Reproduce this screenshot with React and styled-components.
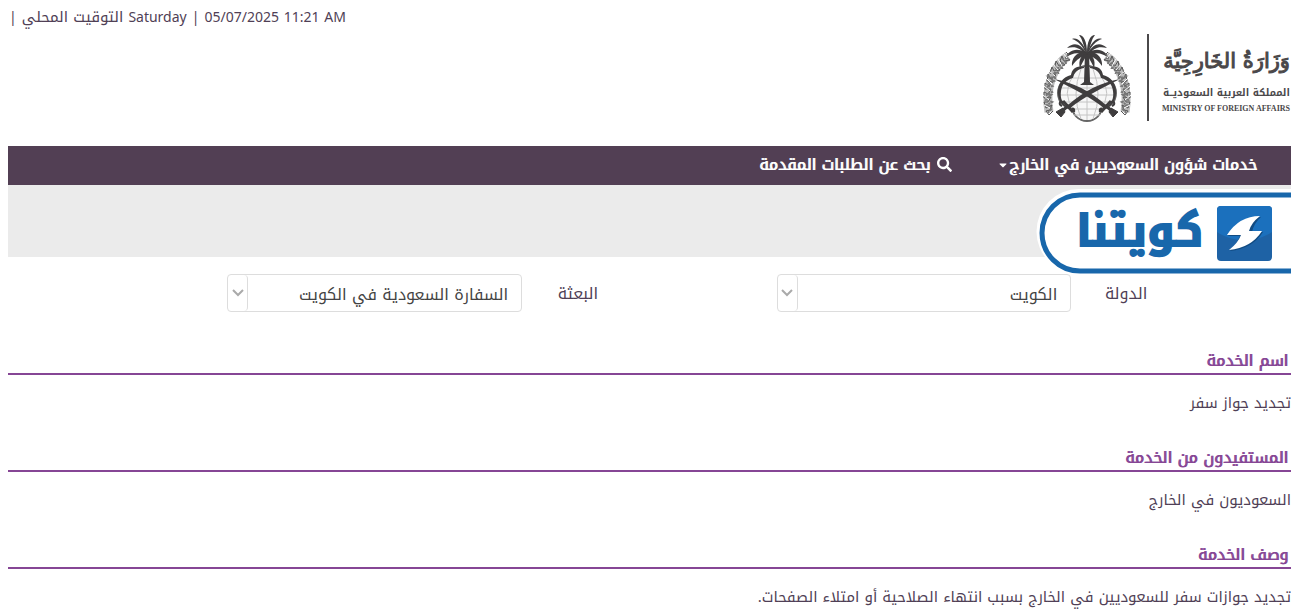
import React, { useState } from "react";
import styled, { createGlobalStyle } from "styled-components";
import { FaSearch, FaCaretDown } from "react-icons/fa";

const GlobalStyle = createGlobalStyle`
  * {
    box-sizing: border-box;
  }
  body {
    margin: 0 4px 0 8px;
    background-color: #fff;
    color: #503f56;
    font-family: "Noto Kufi Arabic", "Droid Arabic Kufi", "Noto Sans", "Noto Sans Arabic", "DejaVu Sans", sans-serif;
    font-size: 15px;
    line-height: 24px;
  }
`;

const Page = styled.div`
  position: relative;
`;

const TopBar = styled.div`
  direction: ltr;
  display: flex;
  align-items: baseline;
  gap: 5px;
  height: 32px;
  padding: 5px 1px;
  font-size: 14px;
`;

const LocalTime = styled.span`
  font-size: 15px;
`;

const Header = styled.header`
  height: 114px;
`;

const Nav = styled.nav`
  display: flex;
  align-items: center;
  gap: 45px;
  height: 39px;
  padding: 0 34px 2px;
  background-color: #523f54;
`;

const NavLink = styled.a`
  display: flex;
  align-items: center;
  gap: ${(props) => props.$gap || "0"};
  color: #fff;
  font-size: 16px;
  text-shadow: 1px 0 #fff;
  text-decoration: none;
`;

const Banner = styled.div`
  position: relative;
  height: 72px;
  background-color: #ebebeb;
`;

const Badge = styled.svg`
  position: absolute;
  top: 4px;
  right: -1px;
  z-index: 2;
  overflow: visible;
`;

const Form = styled.form`
  display: flex;
  justify-content: space-between;
  padding: 17px 11.2% 0 17.1%;
`;

const Field = styled.div`
  display: flex;
  align-items: center;
  width: 40.3%;
`;

const Label = styled.label`
  width: 76px;
  padding-top: 2px;
  font-size: 16px;
`;

const SelectBox = styled.div`
  position: relative;
  flex: 1;
`;

const Select = styled.select`
  display: block;
  width: 100%;
  height: 38px;
  padding: 2px 13px 0 24px;
  appearance: none;
  border: 1px solid #ddd;
  border-radius: 4px;
  background-color: #fff;
  color: #444;
  font-family: inherit;
  font-size: 16px;
`;

const SelectArrow = styled.span`
  position: absolute;
  top: 1px;
  bottom: 1px;
  left: 1px;
  display: flex;
  align-items: center;
  justify-content: center;
  width: 20px;
  border-right: 1px solid #ddd;
  border-radius: 4px;
  pointer-events: none;
`;

const Main = styled.main`
  padding-top: 33px;
`;

const Section = styled.section`
  height: 97px;
`;

const Title = styled.h2`
  height: 30px;
  margin: 0;
  padding: 3px 3px 0;
  border-bottom: 2px solid #864695;
  color: #864695;
  font-size: 16px;
  font-weight: normal;
  line-height: 26px;
  text-shadow: 1px 0 #864695;
`;

const Text = styled.p`
  margin: 0;
  padding-top: 16px;
`;

const sections = [
  { title: "اسم الخدمة", text: "تجديد جواز سفر" },
  { title: "المستفيدون من الخدمة", text: "السعوديون في الخارج" },
  {
    title: "وصف الخدمة",
    text: "تجديد جوازات سفر للسعوديين في الخارج بسبب انتهاء الصلاحية أو امتلاء الصفحات.",
  },
];

const fronds = [
  "M47 22C40 11 34 10 27 16C36 14 40 16 47 24Z",
  "M47 21C36 14 28 19 25 26C34 20 39 20 47 25Z",
  "M47 21C38 18 31 26 32 34C37 27 41 24 47 24Z",
  "M47 22C41 22 38 29 40 36C43 29 45 26 47 24Z",
  "M47 21C43 11 38 5 32 7C38 9 42 13 47 23Z",
  "M47 21C47 10 44 3 39 3C43 8 43 13 47 23Z",
];

const Sword = () => (
  <g>
    <path d="M14 47C32 50 51 59 67 74L65 77C48 63 31 56 14 47Z" fill="#3f3d3e" />
    <path d="M61 80L71 69M65 73L73 80" stroke="#3f3d3e" strokeWidth="3" />
    <path d="M71 76L78 80L73 85L69 80Z" fill="#3f3d3e" stroke="#3f3d3e" />
    <path d="M62 80C62 75 59 76 60 80M71 70C74 68 76 72 72 74" fill="none" stroke="#3f3d3e" strokeWidth="2" />
  </g>
);

const Emblem = () => (
  <g>
    <g fill="#f7f7f7" stroke="#666" strokeWidth="2">
      <circle cx="47" cy="50" r="16" />
      <circle cx="34" cy="61" r="16" />
      <circle cx="60" cy="61" r="16" />
      <circle cx="47" cy="74" r="15" />
    </g>
    <g fill="#f7f7f7">
      <circle cx="47" cy="50" r="15" />
      <circle cx="34" cy="61" r="15" />
      <circle cx="60" cy="61" r="15" />
      <circle cx="47" cy="74" r="14" />
    </g>
    <path
      d="M20 56H74M19 63H75M22 70H72M31 77H63M34 83H60M33 46H61M47 36V88M41 37Q31 62 41 87M53 37Q63 62 53 87M34 42Q20 62 35 80M60 42Q74 62 59 80"
      fill="none"
      stroke="#c4c4c4"
    />
    <path d="M45 21H49L50 50L54 53H40L44 50Z" fill="#3f3d3e" />
    {[0, 1].map((side) => (
      <g key={side} transform={side ? "translate(94 0) scale(-1 1)" : undefined}>
        <path
          d="M44 35C36 33 32 37 31 43C23 45 18 51 18 60C18 68 22 74 28 76C22 71 20 66 21 59C22 52 26 48 33 46C34 40 38 37 44 36Z"
          fill="#3f3d3e"
        />
        {fronds.map((d) => (
          <path key={d} d={d} fill="#3f3d3e" />
        ))}
        <Sword />
        <path d="M28 24C12 35 5 57 9 80" fill="none" stroke="#bbb" strokeWidth="9" />
        <path
          d="M26 20L29 23L25 25L30 28L24 29L22 24L20 29L25 33L19 34L16 29L15 34L20 38L14 39L12 35L10 41L16 43L11 47L8 42L7 49L13 50L9 54L5 51L5 57L11 57L8 62L4 60L4 66L11 65L8 70L4 70L6 76L12 73L10 78L6 79L9 83L13 79"
          fill="none"
          stroke="#555"
        />
        <path
          d="M28 26L23 27L27 31L20 32L22 36L16 36L18 41L13 41L15 46L9 45L14 49L8 51L12 54L6 55L12 60L6 63L11 63L6 68L12 70L7 73L12 76L8 81"
          fill="none"
          stroke="#777"
          strokeWidth="2"
          strokeDasharray="3 1 2 1"
        />
        <path
          d="M23 21L27 26M18 27L22 34M13 32L18 38M9 39L15 44M6 46L12 52M4 54L10 59M3 63L9 68M4 73L10 76"
          stroke="#fff"
        />
      </g>
    ))}
  </g>
);

const LogoBox = styled.div`
  display: flex;

  svg {
    flex-shrink: 0;
    overflow: visible;
  }
`;

const MinistryLogo = () => (
  <LogoBox>
    <svg width="251" height="96" viewBox="0 0 251 96" role="img" aria-label="وزارة الخارجية">
      <Emblem />
      <path d="M107 2H109V89H107Z" fill="#4a484a" />
      <g fill="#4a484a" direction="rtl">
        <text x="250" y="36" fontSize="21" fontFamily="DejaVu Sans" stroke="#4a484a">
          وَزَارَةُ الخَارِجِيَّة
        </text>
        <text x="250" y="64" fontSize="10" fontWeight="bold">
          المملكة العربية السعوديــة
        </text>
      </g>
      <text
        x="250"
        y="79"
        fill="#4a484a"
        fontSize="8"
        fontWeight="bold"
        fontFamily="Liberation Serif"
        direction="ltr"
        textAnchor="end"
      >
        MINISTRY OF FOREIGN AFFAIRS
      </text>
    </svg>
  </LogoBox>
);

const KuwaitnaBadge = () => (
  <Badge width="254" height="85" viewBox="0 0 254 85">
    <path d="M254 0H41A42 42 0 0 0 41 85H254Z" fill="#fff" />
    <path d="M254 6H42A37 37 0 0 0 42 82H254" fill="#fff" stroke="#1867ab" strokeWidth="5" />
    <rect x="179" y="17" width="55" height="55" rx="4" fill="#1e62a5" />
    <path d="M183 17H230Q234 17 234 21V43C218 54 195 54 179 43V21Q179 17 183 17Z" fill="#1b70bd" />
    <path d="M223 28Q201 29 190 47H202Q198 56 192 62Q214 60 225 43H214Q216 34 223 28Z" fill="#114b82" />
    <path d="M222 27Q201 27 189 46H203Q200 54 191 61Q213 59 224 42H211Q213 34 222 27Z" fill="#fff" />
    <text x="165" y="57" direction="rtl" fill="#1867ab" stroke="#1867ab" strokeWidth="2" fontSize="44" fontWeight="bold">
      كويتنا
    </text>
  </Badge>
);

const SelectField = ({ id, label, options }) => {
  const [value, setValue] = useState(options[0]);
  return (
    <Field>
      <Label htmlFor={id}>{label}</Label>
      <SelectBox>
        <Select id={id} value={value} onChange={(e) => setValue(e.target.value)}>
          {options.map((option) => (
            <option key={option}>{option}</option>
          ))}
        </Select>
        <SelectArrow>
          <svg width="12" height="8" viewBox="0 0 12 8">
            <path d="M1 1L6 6L11 1" fill="none" stroke="#aaa" strokeWidth="2" />
          </svg>
        </SelectArrow>
      </SelectBox>
    </Field>
  );
};

const App = () => {
  return (
    <Page dir="rtl" lang="ar">
      <GlobalStyle />
      <TopBar>
        <span>|</span>
        <LocalTime>التوقيت المحلي</LocalTime>
        <span>Saturday</span>
        <span>|</span>
        <span>05/07/2025 11:21 AM</span>
      </TopBar>
      <Header>
        <MinistryLogo />
      </Header>
      <Nav>
        <NavLink href="#services">
          خدمات شؤون السعوديين في الخارج
          <FaCaretDown size={12} />
        </NavLink>
        <NavLink href="#search" $gap="7px">
          <FaSearch size={15} />
          بحث عن الطلبات المقدمة
        </NavLink>
      </Nav>
      <Banner>
        <KuwaitnaBadge />
      </Banner>
      <Form>
        <SelectField id="country" label="الدولة" options={["الكويت"]} />
        <SelectField id="mission" label="البعثة" options={["السفارة السعودية في الكويت"]} />
      </Form>
      <Main>
        {sections.map((section) => (
          <Section key={section.title}>
            <Title>{section.title}</Title>
            <Text>{section.text}</Text>
          </Section>
        ))}
      </Main>
    </Page>
  );
};

export default App;
